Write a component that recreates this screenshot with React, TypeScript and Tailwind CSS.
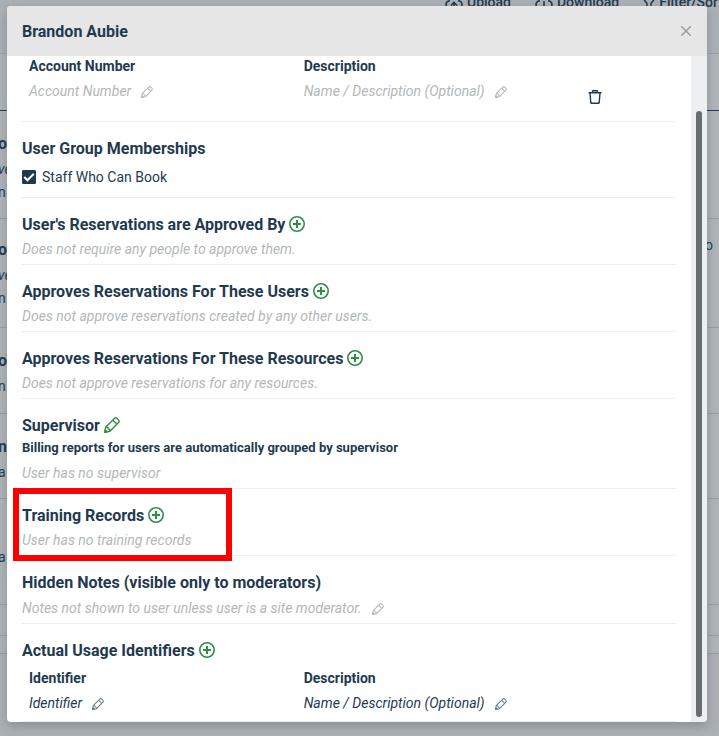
import clsx from 'clsx'
import React from 'react'

interface IconProps {
  className?: string
}

const PlusIcon = () => (
  <svg className="h-4 w-4" viewBox="0 0 16 16" fill="none" stroke="currentColor">
    <circle cx="8" cy="8" r="7.2" strokeWidth={1.6} />
    <path d="M8 4v8M4 8h8" strokeWidth={2} />
  </svg>
)

const PencilIcon = ({ className }: IconProps) => (
  <svg className={className} viewBox="0 0 16 16" fill="none" stroke="currentColor" strokeWidth={1.4} strokeLinejoin="round">
    <path d="M.8 15.200l.8-4.900L10.400 1.500q1.300-1.300 2.600 0l1.500 1.500q1.300 1.300 0 2.600L5.700 14.400z" />
    <path d="M9 3.200l3.800 3.800M1.900 10.200q2.600-.4 2.200 1.700 2-.3 1.700 2.200" />
    <path d="M.8 15.200l.4-2.300 1.900 1.900z" fill="currentColor" />
  </svg>
)

const TrashIcon = () => (
  <svg className="h-[14px] w-[14px]" viewBox="0 0 14 14" fill="none" stroke="currentColor" strokeWidth={1.4}>
    <path d="M.5 2.800h13M4.500 2.800V1.400q0-.7.7-.7h3.600q.7 0 .7.700v1.400M2 3l.8 9.700q.1.600.7.600h7q.6 0 .7-.6L12 3" />
  </svg>
)

const CloseIcon = () => (
  <svg className="h-[10px] w-[10px]" viewBox="0 0 10 10" fill="none" stroke="currentColor" strokeWidth={1.4}>
    <path d="M.3.3l9.400 9.400M9.700.3L.3 9.700" />
  </svg>
)

const CloudIcon = (props: { up?: boolean }) => (
  <svg className="h-4 w-[18px]" viewBox="0 0 18 16" fill="none" stroke="currentColor" strokeWidth={1.6}>
    <path d="M4 14Q1 13.500 1 10.500T4 7a5 5 0 0110 0q3 .5 3 3.500T14 14" />
    <path d={props.up ? 'M9 16V8.500M6 11.500l3-3 3 3' : 'M9 7v8M6 12l3 3 3-3'} />
  </svg>
)

const FilterIcon = () => (
  <svg className="h-4 w-3" viewBox="0 0 12 16" fill="none" stroke="currentColor" strokeWidth={1.5}>
    <path d="M.5 3h11v2L8 9.500V16M.5 3v2L4 9.500V16" />
  </svg>
)

interface HeadingProps {
  title: string
  action?: 'add' | 'edit'
}

const Heading = ({ title, action }: HeadingProps) => (
  <div className="flex h-6 items-center gap-1">
    <h2 className="pt-0.5 text-base font-bold">{title}</h2>
    {action && (
      <button aria-label={`${action} ${title}`} className="text-[#2f8f46]">
        {action === 'add' ? <PlusIcon /> : <PencilIcon className="h-4 w-4" />}
      </button>
    )}
  </div>
)

const Section = (props: { children: React.ReactNode }) => (
  <section className="relative border-b border-[#ebedee] pt-3.5 pb-0.5">{props.children}</section>
)

const Note = (props: { children: React.ReactNode }) => (
  <p className="flex h-[26px] items-center text-sm text-[#b3b7b9] italic">{props.children}</p>
)

interface EditableProps {
  text: string
  muted?: boolean
}

const Editable = ({ text, muted }: EditableProps) => (
  <button className={clsx('flex h-6 items-center gap-2.5 text-sm italic', muted && 'text-[#b3b7b9]')}>
    {text}
    <PencilIcon className={clsx('mt-0.5 h-3 w-3', !muted && 'text-[#6b7c88]')} />
  </button>
)

interface RecordTableProps {
  label: string
  muted?: boolean
  removable?: boolean
}

const RecordTable = ({ label, muted, removable }: RecordTableProps) => (
  <table className="w-full table-fixed text-left text-sm">
    <thead>
      <tr className="h-5">
        <th className="w-[42%] px-[7px] leading-5 font-bold">{label}</th>
        <th className="w-[42%] px-[7px] leading-5 font-bold">Description</th>
        <td></td>
      </tr>
    </thead>
    <tbody>
      <tr className={removable ? 'h-[42px]' : 'h-[31px]'}>
        <td className="px-[7px] pt-[3px] align-top"><Editable text={label} muted={muted} /></td>
        <td className="px-[7px] pt-[3px] align-top"><Editable text="Name / Description (Optional)" muted={muted} /></td>
        <td className="px-[17px] align-middle">
          {removable && <button aria-label="Delete account" className="block"><TrashIcon /></button>}
        </td>
      </tr>
    </tbody>
  </table>
)

interface RowProps {
  name?: string
  detail?: string
  place?: string
  side?: string
  className: string
}

const Row = ({ name, detail, place, side, className }: RowProps) => (
  <li className={clsx('flex items-center justify-between border-b border-[#989fa5]', className)}>
    <div className="-ml-0.5">
      {name && <p className="h-7 text-base leading-7 font-bold">{name}</p>}
      {detail && <p className="h-[23px] text-sm leading-[23px] italic">{detail}</p>}
      {place && <p className="h-[23px] text-sm leading-[23px]">{place}</p>}
    </div>
    <span className="mt-4 mr-1.5 self-start text-sm">{side}</span>
  </li>
)

const Backdrop = () => (
  <div aria-hidden="true" className="absolute inset-0 overflow-hidden bg-[#acb1b5]">
    <div className="flex h-[54px] items-start justify-end gap-6 border-b border-[#9aa0a6] text-sm font-medium">
      <span className="-mt-2 flex items-center gap-1"><CloudIcon up />Upload</span>
      <span className="-mt-2 flex items-center gap-1"><CloudIcon />Download</span>
      <span className="-mt-2 -mr-1 flex items-center gap-1"><FilterIcon />Filter/Sort</span>
    </div>
    <div className="h-[57px] border-b border-[#1f3d54] bg-[#b0b5b9]"></div>
    <ul className="bg-[#b0b5b9]">
      <Row name="o" detail="ve" place="n" className="h-[108px] pt-1" />
      <Row name="o" detail="ve" place="n" side="o" className="h-[109px]" />
      <Row name="o" place="n" className="h-[86px] pt-1" />
      <Row name="n" place="a" className="h-[85px] pt-1" />
      <Row place="a" className="h-[106px] pt-3" />
      <Row className="h-[31px]" />
      <Row className="h-[18px]" />
    </ul>
  </div>
)

export default function App() {
  return (
    <div className="relative min-h-screen pt-1.5 pr-3 pb-3.5 pl-[7px] font-[Roboto,sans-serif] text-[#1f3a4f]">
      <Backdrop />
      <div role="dialog" aria-labelledby="dialog-title" className="relative overflow-hidden rounded bg-white shadow-[0_4px_12px_rgba(60,80,95,0.35)]">
        <header className="flex h-[50px] items-center justify-between bg-[#e6e6e6] pr-4 pl-[15px]">
          <h1 id="dialog-title" className="pt-0.5 text-base font-bold">Brandon Aubie</h1>
          <button aria-label="Close" className="text-[#929ba3]"><CloseIcon /></button>
        </header>
        <div className="flex">
          <main className="min-w-0 flex-1 px-[15px]">
            <section className="border-b border-[#ebedee] pb-[3px]">
              <RecordTable label="Account Number" muted removable />
            </section>
            <section className="border-b border-[#ebedee] pt-3.5 pb-2">
              <Heading title="User Group Memberships" />
              <label className="mt-1.5 mb-0.5 flex h-[21px] items-center gap-1.5 text-sm">
                <span className="grid">
                  <input type="checkbox" defaultChecked className="peer col-start-1 row-start-1 h-3.5 w-3.5 appearance-none rounded-[1px] border border-[#1f3a4f] checked:bg-[#1f3a4f]" />
                  <svg className="pointer-events-none col-start-1 row-start-1 hidden h-3.5 w-3.5 text-white peer-checked:block" viewBox="0 0 14 14" fill="none" stroke="currentColor" strokeWidth={2}>
                    <path d="M2.200 7l3.300 3.300 6.300-6.600" />
                  </svg>
                </span>
                Staff Who Can Book
              </label>
            </section>
            <Section>
              <Heading title="User's Reservations are Approved By" action="add" />
              <Note>Does not require any people to approve them.</Note>
            </Section>
            <Section>
              <Heading title="Approves Reservations For These Users" action="add" />
              <Note>Does not approve reservations created by any other users.</Note>
            </Section>
            <Section>
              <Heading title="Approves Reservations For These Resources" action="add" />
              <Note>Does not approve reservations for any resources.</Note>
            </Section>
            <Section>
              <Heading title="Supervisor" action="edit" />
              <p className="mt-px mb-0.5 text-[13px] leading-5 font-bold">Billing reports for users are automatically grouped by supervisor</p>
              <Note>User has no supervisor</Note>
            </Section>
            <Section>
              <Heading title="Training Records" action="add" />
              <Note>User has no training records</Note>
              <div className="pointer-events-none absolute -top-px -left-[9px] h-[73px] w-[219px] border-6 border-[#ff0000]"></div>
            </Section>
            <section className="border-b border-[#ebedee] pt-3.5 pb-[3px]">
              <Heading title="Hidden Notes (visible only to moderators)" />
              <div className="pt-0.5">
                <Editable text="Notes not shown to user unless user is a site moderator." muted />
              </div>
            </section>
            <section className="border-b border-[#ebedee] pt-3.5 pb-0.5">
              <Heading title="Actual Usage Identifiers" action="add" />
              <div className="pt-1.5">
                <RecordTable label="Identifier" />
              </div>
            </section>
          </main>
          <div className="flex w-4 justify-center bg-[#edeff1] pt-[55px] pb-[5px]">
            <div className="w-1.5 rounded-full bg-[#696d70]"></div>
          </div>
        </div>
      </div>
    </div>
  )
}
